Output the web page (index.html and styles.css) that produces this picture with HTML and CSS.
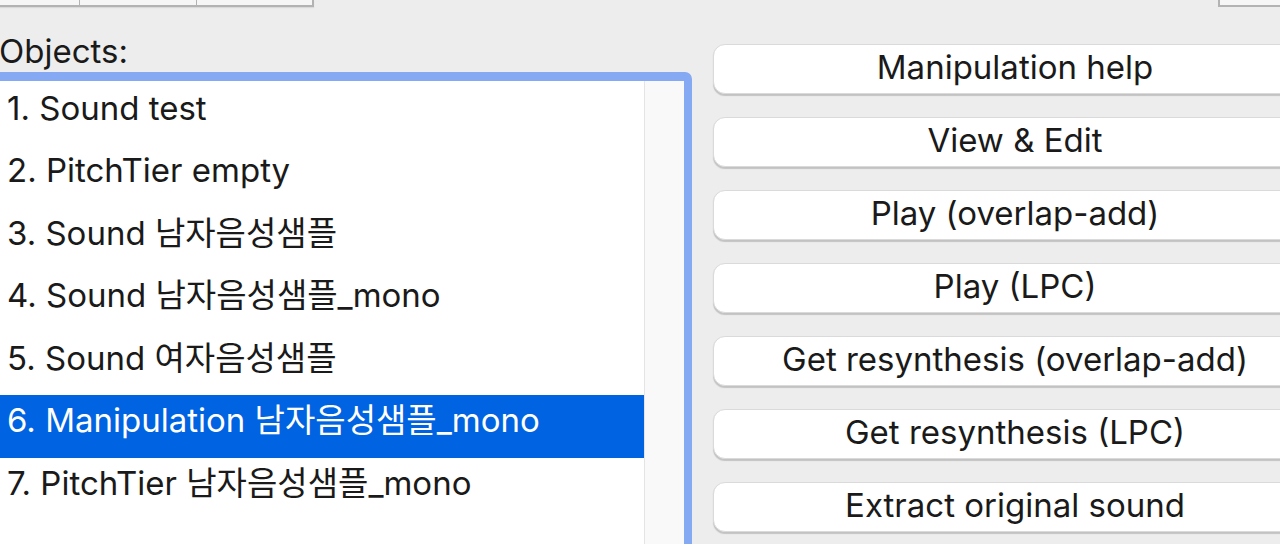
FILE: index.html
```html
<!DOCTYPE html>
<html lang="en">
<head>
<meta charset="utf-8">
<title>Objects</title>
<link rel="stylesheet" href="styles.css">
</head>
<body>
<div class="window">
  <div class="topbar">
    <div class="seg">
      <div class="seg-item seg-a"></div>
      <div class="seg-item seg-b"></div>
      <div class="seg-item seg-c"></div>
    </div>
    <div class="corner-box"></div>
  </div>
  <div class="main">
    <div class="objects">
      <div class="label">Objects:</div>
      <div class="listbox">
        <ul class="list">
          <li class="row">1. Sound test</li>
          <li class="row">2. PitchTier empty</li>
          <li class="row">3. Sound 남자음성샘플</li>
          <li class="row">4. Sound 남자음성샘플_mono</li>
          <li class="row">5. Sound 여자음성샘플</li>
          <li class="row selected">6. Manipulation 남자음성샘플_mono</li>
          <li class="row">7. PitchTier 남자음성샘플_mono</li>
        </ul>
        <div class="scrolltrack"></div>
      </div>
    </div>
    <div class="actions">
      <button class="btn">Manipulation help</button>
      <button class="btn">View &amp; Edit</button>
      <button class="btn">Play (overlap-add)</button>
      <button class="btn">Play (LPC)</button>
      <button class="btn">Get resynthesis (overlap-add)</button>
      <button class="btn">Get resynthesis (LPC)</button>
      <button class="btn">Extract original sound</button>
    </div>
  </div>
</div>
</body>
</html>
```

FILE: styles.css
```css
html, body {
  margin: 0;
  padding: 0;
}
body {
  width: 1280px;
  height: 544px;
  overflow: hidden;
  background: #ededed;
  font-family: "Inter", "Noto Sans CJK KR", sans-serif;
  color: #1a1a1a;
}
.window {
  width: 1280px;
  height: 544px;
  overflow: hidden;
}
.topbar {
  display: flex;
  justify-content: space-between;
  height: 7px;
}
.seg {
  display: flex;
  margin-left: -20px;
  height: 7px;
  box-shadow: 0 1px 1px rgba(0,0,0,0.08);
}
.seg-item {
  box-sizing: border-box;
  height: 7px;
  background: #f6f6f6;
  border-bottom: 2px solid #b3b3b3;
  border-right: 1px solid #b3b3b3;
}
.seg-a { width: 100px; }
.seg-b { width: 117px; }
.seg-c { width: 117px; border-right-width: 2px; }
.corner-box {
  box-sizing: border-box;
  width: 82px;
  margin-right: -20px;
  height: 7px;
  background: #f6f6f6;
  border-left: 2px solid #b3b3b3;
  border-bottom: 2px solid #b3b3b3;
}
.main {
  display: flex;
  align-items: flex-start;
}
.objects {
  width: 712px;
  margin-left: -20px;
  flex: none;
}
.label {
  margin-top: 26px;
  padding-left: 19px;
  font-size: 33px;
  line-height: 36px;
  height: 36px;
}
.listbox {
  margin-top: 3px;
  box-sizing: border-box;
  height: 520px;
  border: 8px solid #85a9f3;
  border-top-width: 9px;
  border-radius: 7px;
  background: #ffffff;
  display: flex;
}
.list {
  list-style: none;
  margin: 0;
  padding: 1.5px 0 0 0;
  flex: 1;
}
.row {
  box-sizing: border-box;
  height: 62.5px;
  line-height: 51px;
  padding-left: 19px;
  font-size: 33px;
  white-space: nowrap;
}
.row.selected {
  background: #0063e1;
  color: #ffffff;
}
.scrolltrack {
  flex: none;
  width: 39px;
  background: #f9f9f9;
  border-left: 1px solid #e4e4e4;
}
.actions {
  flex: none;
  margin-left: 21px;
  padding-top: 37px;
  display: flex;
  flex-direction: column;
  gap: 23px;
}
.btn {
  box-sizing: border-box;
  width: 604px;
  height: 50px;
  margin: 0;
  padding: 0 0 4px 0;
  background: #ffffff;
  border: 1px solid #dadada;
  border-radius: 12px;
  box-shadow: 0 1.5px 1px rgba(0,0,0,0.18);
  font-family: "Inter", "Noto Sans CJK KR", sans-serif;
  font-size: 33px;
  color: #1a1a1a;
  text-align: center;
  line-height: 44px;
}
```
